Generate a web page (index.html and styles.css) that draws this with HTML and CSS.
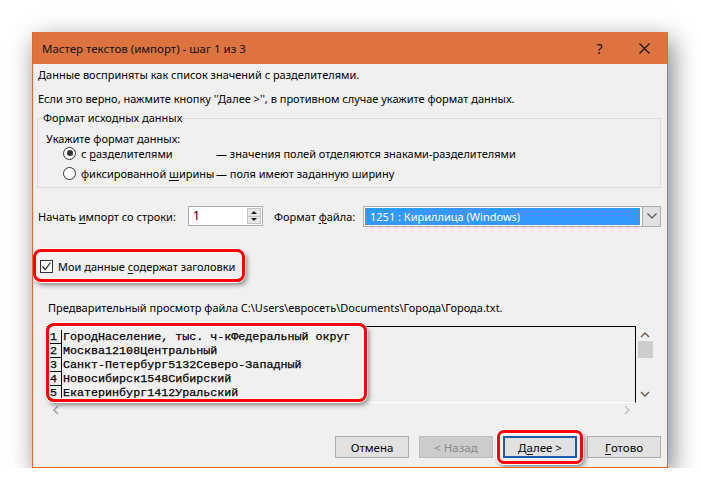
FILE: index.html
```html
<!DOCTYPE html>
<html lang="ru">
<head>
    <meta charset="UTF-8">
    <title>Мастер текстов (импорт) - шаг 1 из 3</title>
    <link rel="stylesheet" href="styles.css">
</head>
<body>
    <div class="dialog">
        <div class="titlebar">
            <span class="title">Мастер текстов (импорт) - шаг 1 из 3</span>
            <span class="tb-btn">?</span>
            <span class="tb-btn">
                <svg width="11" height="11" viewBox="0 0 11 11"><path d="M0.5 0.5L10.5 10.5M10.5 0.5L0.5 10.5" stroke="#111" stroke-width="1.1" fill="none"/></svg>
            </span>
        </div>

        <div class="content">
            <div class="intro">
                <p>Данные восприняты как список значений с разделителями.</p>
                <p>Если это верно, нажмите кнопку ''Далее &gt;'', в противном случае укажите формат данных.</p>
            </div>

            <fieldset class="group">
                <legend>Формат исходных данных</legend>
                <div class="group-caption">Укажите формат данных:</div>
                <div class="radio-row">
                    <span class="radio-opt"><span class="radio checked"></span><span>с <u>р</u>азделителями</span></span>
                    <span>— значения полей отделяются знаками-разделителями</span>
                </div>
                <div class="radio-row">
                    <span class="radio-opt"><span class="radio"></span><span>фиксированной <u>ш</u>ирины</span></span>
                    <span>— поля имеют заданную ширину</span>
                </div>
            </fieldset>

            <div class="import-row">
                <span class="import-label">Начать <u>и</u>мпорт со строки:</span>
                <div class="spin-input">
                    <span class="spin-value">1</span>
                    <span class="spin-btns">
                        <span class="spin-up"></span>
                        <span class="spin-down"></span>
                    </span>
                </div>
                <span class="format-label">Формат <u>ф</u>айла:</span>
                <div class="select">
                    <span class="select-value">1251 : Кириллица (Windows)</span>
                    <span class="select-arrow">
                        <svg width="10" height="6" viewBox="0 0 10 6"><path d="M0.5 0.5L5 5L9.5 0.5" stroke="#555" stroke-width="1.2" fill="none"/></svg>
                    </span>
                </div>
            </div>

            <div class="callout check-callout">
                <span class="checkbox">
                    <svg width="11" height="11" viewBox="0 0 11 11"><path d="M1.5 5.5L4.2 8.5L9.5 1.5" stroke="#222" stroke-width="1.2" fill="none"/></svg>
                </span>
                <span class="check-label">Мои данные <u>с</u>одержат заголовки</span>
            </div>

            <div class="preview-label">Предварительный просмотр файла C:\Users\евросеть\Documents\Города\Города.txt.</div>

            <div class="preview">
                <div class="preview-main">
                    <div class="lines">
                        <div class="line"><span class="num">1</span><span class="cell">ГородНаселение, тыс. ч-кФедеральный округ</span></div>
                        <div class="line"><span class="num">2</span><span class="cell">Москва12108Центральный</span></div>
                        <div class="line"><span class="num">3</span><span class="cell">Санкт-Петербург5132Северо-Западный</span></div>
                        <div class="line"><span class="num">4</span><span class="cell">Новосибирск1548Сибирский</span></div>
                        <div class="line"><span class="num">5</span><span class="cell">Екатеринбург1412Уральский</span></div>
                    </div>
                    <div class="vscroll">
                        <svg width="10" height="6" viewBox="0 0 10 6"><path d="M1 5L5 1L9 5" stroke="#6e6258" stroke-width="1.5" fill="none"/></svg>
                        <span class="thumb"></span>
                        <span class="vspace"></span>
                        <svg width="10" height="6" viewBox="0 0 10 6"><path d="M1 1L5 5L9 1" stroke="#6e6258" stroke-width="1.5" fill="none"/></svg>
                    </div>
                </div>
                <div class="hscroll">
                    <svg width="6" height="10" viewBox="0 0 6 10"><path d="M5 1L1 5L5 9" stroke="#a0a0a0" stroke-width="1.5" fill="none"/></svg>
                    <svg width="6" height="10" viewBox="0 0 6 10"><path d="M1 1L5 5L1 9" stroke="#c4c4c4" stroke-width="1.5" fill="none"/></svg>
                </div>
                <div class="callout preview-callout"></div>
            </div>

            <div class="buttons">
                <span class="btn">Отмена</span>
                <span class="btn disabled">&lt; Назад</span>
                <span class="callout btn-callout"><span class="btn default">Д<u>а</u>лее &gt;</span></span>
                <span class="btn"><u>Г</u>отово</span>
            </div>
        </div>
    </div>
</body>
</html>
```

FILE: styles.css
```css
body {
    margin: 0;
    background-color: #fff;
    font-family: 'Noto Sans', sans-serif;
    font-size: 11px;
    color: #000;
}

u {
    text-decoration-thickness: 1px;
    text-underline-offset: 2px;
}

.dialog {
    margin: 32px 0 0 32px;
    width: 636px;
    height: 436px;
    box-sizing: border-box;
    background-color: #f0f0f0;
    border: 1px solid #e2692b;
    border-top: none;
    box-shadow: 4px 8px 24px rgba(0, 0, 0, 0.5);
    overflow: hidden;
}

.titlebar {
    height: 32px;
    background-color: #dd7440;
    display: flex;
    align-items: center;
    padding-left: 9px;
    color: #111;
    font-size: 11.5px;
}

.title {
    flex-grow: 1;
}

.tb-btn {
    width: 45px;
    height: 32px;
    display: flex;
    align-items: center;
    justify-content: center;
    font-size: 14px;
}

.content {
    padding: 0 6px 0 4px;
}

.intro {
    margin-top: -1px;
}

.intro p {
    margin: 0;
    padding-left: 1px;
    line-height: 24px;
}

.group {
    margin: -1px 0 0 0;
    padding: 0 0 4px 4px;
    border: 1px solid #dcdcdc;
}

.group legend {
    padding: 0 1px;
    line-height: 16px;
}

.group-caption {
    margin: 7px 0 -2px 0;
    padding-left: 4px;
    line-height: 12px;
}

.radio-row {
    display: grid;
    grid-template-columns: 153px auto;
    align-items: center;
    height: 20px;
    padding-left: 21px;
    white-space: nowrap;
}

.radio-opt {
    display: flex;
    align-items: center;
}

.radio {
    width: 11px;
    height: 11px;
    border: 1px solid #333;
    border-radius: 50%;
    background-color: #fff;
    margin-right: 5px;
    display: flex;
    align-items: center;
    justify-content: center;
}

.radio.checked::after {
    content: '';
    width: 6px;
    height: 6px;
    border-radius: 50%;
    background-color: #333;
}

.import-row {
    display: flex;
    align-items: center;
    margin-top: 18px;
    height: 20px;
    padding-left: 1px;
    white-space: nowrap;
}

.import-label {
    width: 150px;
}

.spin-input {
    width: 75px;
    height: 20px;
    box-sizing: border-box;
    border: 1px solid #adadad;
    background-color: #fff;
    display: flex;
}

.spin-value {
    flex-grow: 1;
    padding-left: 4px;
    line-height: 18px;
    font-size: 12px;
}

.spin-btns {
    width: 14px;
    margin: 1px 1px 1px 0;
    display: flex;
    flex-direction: column;
}

.spin-up, .spin-down {
    flex-grow: 1;
    background-color: #e6e6e6;
    border: 1px solid #c4c4c4;
    display: flex;
    align-items: center;
    justify-content: center;
}

.spin-up {
    border-bottom: none;
}

.spin-up::after {
    content: '';
    border: 3px solid transparent;
    border-bottom: 3px solid #222;
    border-top: none;
}

.spin-down::after {
    content: '';
    border: 3px solid transparent;
    border-top: 3px solid #222;
    border-bottom: none;
}

.format-label {
    margin-left: 11px;
    width: 89px;
}

.select {
    width: 298px;
    height: 21px;
    box-sizing: border-box;
    border: 1px solid #adadad;
    background-color: #fff;
    display: flex;
}

.select-value {
    flex-grow: 1;
    margin: 1px 2px 1px 1px;
    background-color: #3399ff;
    border: 1px dotted #c8782a;
    color: #fff;
    padding-left: 4px;
    line-height: 15px;
}

.select-arrow {
    width: 17px;
    background-color: #e1e1e1;
    border-left: 1px solid #adadad;
    display: flex;
    align-items: center;
    justify-content: center;
}

.callout {
    border: 3px solid #f00;
    border-radius: 8px;
    box-shadow: inset 0 0 0 1px #fff, 0 0 0 1px #fff, 2px 3px 5px rgba(0, 0, 0, 0.45);
}

.check-callout {
    display: flex;
    align-items: center;
    margin: 23px 0 0 -4px;
    width: 202px;
    height: 25px;
    padding: 2px 0 0 4px;
    box-sizing: content-box;
    white-space: nowrap;
}

.checkbox {
    width: 11px;
    height: 11px;
    border: 1px solid #333;
    background-color: #fff;
    margin-right: 5px;
    display: flex;
}

.preview-label {
    margin-top: 18px;
    padding-left: 11px;
    line-height: 16px;
    white-space: nowrap;
}

.preview {
    position: relative;
    margin: 10px 0 0 9px;
    width: 607px;
}

.preview-main {
    display: flex;
}

.lines {
    flex-grow: 1;
    height: 72px;
    padding: 3px 0 0 2px;
    border-top: 1px solid #000;
    border-right: 1px solid #000;
    border-bottom: 1px solid #fff;
    font-family: 'Liberation Mono', monospace;
    font-size: 11.7px;
    color: #000;
    -webkit-text-stroke: 0.25px #000;
}

.line {
    display: flex;
    height: 14px;
    line-height: 14px;
}

.num {
    width: 13px;
    box-sizing: border-box;
    border-bottom: 1px solid #000;
    padding-left: 2px;
}

.cell {
    border-left: 1px solid #000;
    padding-left: 1px;
    white-space: pre;
}

.vscroll {
    width: 17px;
    display: flex;
    flex-direction: column;
    align-items: center;
    padding-top: 6px;
}

.thumb {
    width: 15px;
    height: 17px;
    margin-top: 3px;
    margin-left: 1px;
    background-color: #cdcdcd;
}

.vspace {
    flex-grow: 1;
}

.vscroll svg:last-child {
    margin-bottom: 6px;
}

.hscroll {
    width: 589px;
    height: 14px;
    display: flex;
    align-items: center;
    justify-content: space-between;
    padding: 0 5px 0 7px;
    box-sizing: border-box;
}

.preview-callout {
    position: absolute;
    left: 0;
    top: -3px;
    width: 315px;
    height: 73px;
}

.buttons {
    display: flex;
    justify-content: flex-end;
    gap: 10px;
    margin-top: 19px;
}

.btn {
    width: 74px;
    height: 22px;
    box-sizing: border-box;
    background-color: #e1e1e1;
    border: 1px solid #adadad;
    display: flex;
    align-items: center;
    justify-content: center;
    font-size: 11.5px;
}

.btn.disabled {
    background-color: #cccccc;
    border-color: #bfbfbf;
    color: #8a8a8a;
}

.btn.default {
    border: 2px solid #1d5aa8;
}

.btn-callout {
    margin: -6px;
    padding: 3px;
    border-radius: 7px;
}
```
